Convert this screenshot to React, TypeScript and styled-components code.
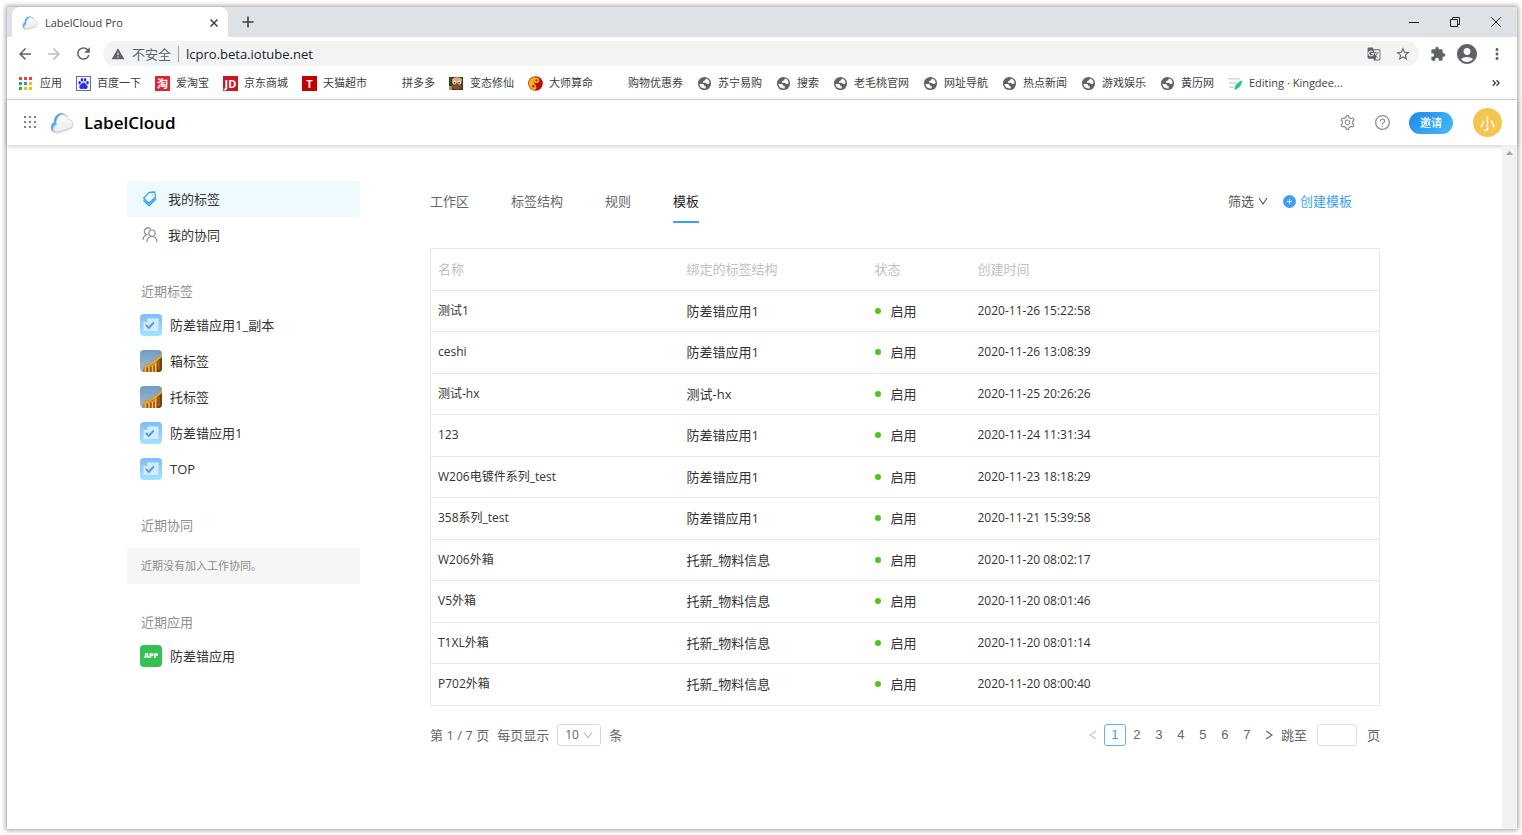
import React from 'react';
import styled, { createGlobalStyle, css } from 'styled-components';
import { MdArrowBack, MdArrowForward, MdRefresh, MdWarning, MdStarBorder, MdExtension, MdAccountCircle, MdMoreVert, MdGTranslate } from 'react-icons/md';
import { AiOutlineQuestionCircle, AiOutlineSetting } from 'react-icons/ai';

const GlobalStyle = createGlobalStyle`
  * { box-sizing: border-box; }
  body {
    margin: 0;
    background: #fff;
    font-family: "Open Sans", "Noto Sans CJK SC", sans-serif;
    font-size: 13px;
    line-height: 18px;
    color: #333;
  }
  a { color: inherit; text-decoration: none; }
  button, input, select { font: inherit; color: inherit; }
  button { border: 0; padding: 0; background: none; display: inline-flex; align-items: center; justify-content: center; }
  ul { list-style: none; margin: 0; padding: 0; }
  svg { display: block; flex: none; }
`;

/* ---------- window frame ---------- */

const Desktop = styled.div`
  min-height: 100vh;
  padding: 7px 5px 6px 7px;
  display: flex;
  flex-direction: column;
`;

const Window = styled.div`
  flex: 1;
  display: flex;
  flex-direction: column;
  background: #fff;
  box-shadow: 0 0 5px 1px rgba(0, 0, 0, 0.4);
`;

const TabStrip = styled.div`
  height: 30px;
  display: flex;
  align-items: center;
  background: #dee1e6;
  color: #3c4043;
`;

const BrowserTab = styled.div`
  align-self: stretch;
  width: 216px;
  margin-left: 5px;
  padding: 2px 10px 0 10px;
  display: flex;
  align-items: center;
  gap: 7px;
  background: #fff;
  border-radius: 8px 8px 0 0;
  font-size: 11px;
  span { flex: 1; }
`;

const NewTab = styled.button`
  width: 40px;
  height: 30px;
`;

const WindowButtons = styled.div`
  margin-left: auto;
  padding-right: 1px;
  display: flex;
  button { width: 41px; height: 26px; }
`;

const Toolbar = styled.div`
  height: 33px;
  padding: 0 11px 0 10px;
  display: flex;
  align-items: center;
  color: #5f6368;
`;

const NavButtons = styled.div`
  display: flex;
  gap: 13px;
  margin-right: 12px;
  button { width: 16px; }
  button:disabled { color: #babcbe; }
`;

const AddressBar = styled.div`
  flex: 1;
  height: 25px;
  padding: 0 8px;
  display: flex;
  align-items: center;
  gap: 7px;
  border-radius: 13px;
  background: #f1f3f4;
  input {
    flex: 1;
    min-width: 0;
    border: 0;
    padding: 0 0 0 7px;
    height: 16px;
    border-left: 1px solid #9aa0a6;
    background: none;
    color: #202124;
    outline: none;
  }
  button + button { margin-left: 7px; }
`;

const ToolbarActions = styled.div`
  display: flex;
  align-items: center;
  gap: 9px;
  margin-left: 11px;
`;

const Bookmarks = styled.nav`
  height: 30px;
  padding: 0 17px 3px 12px;
  display: flex;
  align-items: center;
  justify-content: space-between;
  border-bottom: 1px solid #dadce0;
  font-size: 11px;
  color: #3c4043;
  ul { display: flex; gap: 14px; }
  a { display: flex; align-items: center; gap: 6px; white-space: nowrap; }
`;

const IconSlot = styled.span`
  width: 15px;
  height: 15px;
  flex: none;
`;

/* ---------- application header ---------- */

const AppHeader = styled.header`
  height: 45px;
  padding: 0 15px 0 16px;
  display: flex;
  align-items: center;
  background: #fff;
  box-shadow: 0 1px 5px rgba(0, 0, 0, 0.22);
  color: #8c8c8c;
`;

const Brand = styled.a`
  display: flex;
  align-items: center;
  gap: 10px;
  margin-left: 13px;
  font-size: 17px;
  font-weight: 600;
  line-height: 24px;
  && { color: #000; }
`;

const HeaderActions = styled.div`
  margin-left: auto;
  display: flex;
  align-items: center;
  gap: 18px;
`;

const InviteButton = styled.button`
  width: 44px;
  height: 22px;
  margin-right: 2px;
  border-radius: 11px;
  background: linear-gradient(135deg, #1f87ea, #45bcff);
  color: #fff;
  font-size: 11px;
  font-weight: 500;
`;

const Avatar = styled.button`
  width: 29px;
  height: 29px;
  border-radius: 50%;
  background: #f3c74f;
  color: #fff;
  font-size: 15px;
`;

const Viewport = styled.div`
  flex: 1;
  display: flex;
`;

const Content = styled.div`
  flex: 1;
  min-width: 0;
  padding: 36px 122px 48px 120px;
  display: flex;
  gap: 70px;
`;

const ScrollTrack = styled.div`
  width: 15px;
  padding-top: 5px;
  background: #f1f1f1;
`;

/* ---------- sidebar ---------- */

const Sidebar = styled.aside`
  width: 233px;
  flex: none;
`;

const SideLink = styled.a<{ $active?: boolean; $recent?: boolean }>`
  height: 36px;
  padding: 0 0 1px ${p => (p.$recent ? 13 : 15)}px;
  display: flex;
  align-items: center;
  gap: ${p => (p.$recent ? 8 : 10)}px;
  border-radius: 2px;
  ${p => p.$active && css`background: #effaff;`}
`;

const SideHeading = styled.h2`
  margin: 29px 0 7px;
  padding-left: 14px;
  font-size: 13px;
  font-weight: 400;
  color: #8f8f8f;
`;

const EmptyNote = styled.p`
  height: 36px;
  margin: 14px 0 0;
  padding: 0 14px;
  display: flex;
  align-items: center;
  border-radius: 2px;
  background: #f6f6f6;
  font-size: 11px;
  color: #8c8c8c;
`;

/* ---------- main panel ---------- */

const Main = styled.main`
  flex: 1;
  min-width: 0;
`;

const TabBar = styled.div`
  height: 42px;
  margin-bottom: 25px;
  padding-right: 28px;
  display: flex;
  align-items: stretch;
  justify-content: space-between;
`;

const Tabs = styled.nav`
  display: flex;
  gap: 42px;
`;

const TabLink = styled.a<{ $active?: boolean }>`
  display: flex;
  align-items: center;
  border-bottom: 2px solid ${p => (p.$active ? '#3a9ff5' : 'transparent')};
  color: ${p => (p.$active ? '#222' : '#666')};
`;

const TabActions = styled.div`
  display: flex;
  align-items: center;
  gap: 15px;
  padding-bottom: 2px;
  button { gap: 4px; color: #555; }
  button:last-child { color: #3a9ff5; }
`;

const Table = styled.table`
  width: 100%;
  table-layout: fixed;
  border-collapse: collapse;
  border: 1px solid #e8e8e8;
  tr { height: 41px; border-bottom: 1px solid #e8e8e8; }
  thead tr, tbody tr:nth-child(even) { height: 42px; }
  th, td { padding: 0 7px 1px; text-align: left; }
  th { font-weight: 400; color: #bfbfbf; }
`;

const Col = styled.col<{ $w?: number }>`
  width: ${p => (p.$w ? `${p.$w}px` : 'auto')};
`;

const CompactCell = styled.td`
  font-size: 12px;
`;

const Status = styled.span`
  display: flex;
  align-items: center;
  gap: 10px;
  &::before {
    content: '';
    width: 6px;
    height: 6px;
    border-radius: 50%;
    background: #52c41a;
  }
`;

const PagerBar = styled.div`
  margin-top: 18px;
  display: flex;
  justify-content: space-between;
  color: #666;
`;

const PageSize = styled.label`
  display: flex;
  align-items: center;
  gap: 8px;
`;

const SelectBox = styled.span`
  width: 44px;
  height: 22px;
  display: grid;
  align-items: center;
  border: 1px solid #d9d9d9;
  border-radius: 3px;
  color: #bfbfbf;
  > * { grid-area: 1 / 1; }
  svg { justify-self: end; margin-right: 7px; }
  select {
    appearance: none;
    width: 100%;
    height: 20px;
    padding: 0 0 0 7px;
    border: 0;
    background: none;
    color: #666;
    font-size: 12px;
  }
`;

const Pager = styled.nav`
  display: flex;
  align-items: center;
  height: 22px;
`;

const PageButton = styled.button<{ $current?: boolean }>`
  width: 22px;
  height: 22px;
  font-family: "Liberation Sans", sans-serif;
  ${p => p.$current && css`
    border: 1px solid #5cb3fa;
    border-radius: 3px;
    color: #3a9ff5;
  `}
  &:disabled { color: #c4c4c4; }
`;

const JumpTo = styled.label`
  display: flex;
  align-items: center;
  gap: 10px;
  margin-left: 1px;
  input {
    width: 40px;
    height: 22px;
    border: 1px solid #dcdfe6;
    border-radius: 3px;
    background: #fff;
  }
`;

/* ---------- drawings ---------- */

const Cloud = ({ size }: { size: number }) => (
  <svg width={size} height={size} viewBox="0 0 24 24" aria-hidden="true">
    <defs>
      <linearGradient id={`body${size}`} x1="0" y1="0" x2=".3" y2="1">
        <stop offset="0" stopColor="#ffffff" />
        <stop offset="1" stopColor="#ececee" />
      </linearGradient>
      <linearGradient id={`rim${size}`} x1="0" y1="0" x2="0" y2="1">
        <stop offset="0" stopColor="#3d9bea" />
        <stop offset="1" stopColor="#5bb4f7" />
      </linearGradient>
    </defs>
    <path d="M1.200 18.500C.2 15.500 1.200 12.400 4 11.100 3.800 6.500 6.900 2.400 11.200 2.200c2.900-.1 5.300 1.100 6.300 3.600L8 20.500l-4 .9C2.600 20.900 1.600 19.800 1.200 18.500z" fill={`url(#rim${size})`} />
    <path d="M4 21.500c-2-2.500-1.600-6.200 1.800-7.900C5.400 8.400 7.900 3.700 12 3.200c3.300-.3 5.600 1.700 6.200 4.800 3.400.4 5.400 2.800 5.200 5.900-.3 2.900-2.500 4.600-5.300 5.300L8.200 22.300c-1.600.4-3.100.2-4.200-.8z" fill="#d3d4d7" />
    <path d="M5 19.800c-1-2.300-.1-4.600 2.400-5.700C6.300 9.200 8.600 4.600 12.300 4c2.900-.3 4.900 1.500 5.300 4.700 3 .3 4.900 2.100 4.900 4.600 0 2.300-1.700 3.700-4.500 4.400L8.500 20.200c-1.300.4-2.500.3-3.500-.4z" fill={`url(#body${size})`} />
  </svg>
);

const AppsGrid = () => {
  const colors = ['#ea4335', '#ea4335', '#ea4335', '#34a853', '#4285f4', '#fbbc04', '#34a853', '#fbbc04', '#fbbc04'];
  return (
    <svg width="15" height="15" viewBox="0 0 15 15" aria-hidden="true">
      {colors.map((c, i) => <rect key={i} x={(i % 3) * 5} y={1 + Math.floor(i / 3) * 5} width="3" height="3" fill={c} />)}
    </svg>
  );
};

const Baidu = () => (
  <svg width="15" height="15" viewBox="0 0 15 15" aria-hidden="true">
    <rect x=".5" y=".5" width="14" height="14" fill="#fff" stroke="#5a62e0" />
    <g fill="#2932e1">
      <ellipse cx="3.600" cy="6.800" rx="1.300" ry="1.800" />
      <ellipse cx="5.900" cy="3.900" rx="1.300" ry="1.800" />
      <ellipse cx="9.100" cy="3.900" rx="1.300" ry="1.800" />
      <ellipse cx="11.500" cy="6.800" rx="1.300" ry="1.800" />
      <path d="M7.500 6.600c1.600 0 2.200 1.500 3.300 2.500 1.600 1.500.9 4-1.200 4-1 0-1.300-.3-2.100-.3s-1.100.3-2.100.3c-2.100 0-2.800-2.500-1.200-4 1.100-1 1.700-2.500 3.300-2.500z" />
    </g>
  </svg>
);

const LetterTile = styled.span<{ $bg: string }>`
  width: 15px;
  height: 15px;
  flex: none;
  display: flex;
  align-items: center;
  justify-content: center;
  background: ${p => p.$bg};
  color: #fff;
  font-size: 11px;
  font-weight: 700;
  line-height: 15px;
`;

const Owl = () => (
  <svg width="15" height="15" viewBox="0 0 15 15" aria-hidden="true">
    <rect y="1" width="14" height="13" fill="#4a3218" />
    <rect y="1" width="3" height="7" fill="#2f4420" />
    <rect y="10" width="3" height="4" fill="#7fae4a" />
    <ellipse cx="8" cy="4" rx="5.200" ry="2.800" fill="#d9ad78" />
    <ellipse cx="8" cy="10.500" rx="5" ry="3" fill="#8a4a2c" />
    <circle cx="5.400" cy="6.600" r="2" fill="#f1dfc4" />
    <circle cx="10.400" cy="6.600" r="2" fill="#f1dfc4" />
    <circle cx="5.600" cy="6.700" r=".8" fill="#20150c" />
    <circle cx="10.200" cy="6.700" r=".8" fill="#20150c" />
  </svg>
);

const YinYang = () => (
  <svg width="15" height="15" viewBox="0 0 16 16" aria-hidden="true">
    <circle cx="8" cy="8" r="7.800" fill="#b80f0a" />
    <path d="M8 .7a7.300 7.300 0 0 0-1.500 14.400C8.800 14.500 9.500 12.500 8.500 10.500 7.500 8.500 5.800 7.500 6 4.800 6.100 2.500 7.500 1 9.500.7z" fill="#fcb413" />
    <circle cx="9" cy="4.500" r="3" fill="#fcb413" />
    <circle cx="9" cy="4.600" r="1.200" fill="#b80f0a" />
    <circle cx="5.600" cy="11" r="1.300" fill="#b80f0a" />
  </svg>
);

const Globe = () => (
  <svg width="15" height="15" viewBox="0 0 16 16" aria-hidden="true">
    <circle cx="8" cy="8" r="7" fill="#5f6368" />
    <path d="M2.600 8.400h3c1.200 0 2.200.8 2.200 1.700v.9h1.500v2.100c-1 .4-2.600.2-3.600-.3-1.800-.9-3-2.500-3.100-4.400z" fill="#fff" />
    <path d="M9.600 2.700c2.100.6 3.700 2.400 3.900 4.700-.7.900-1.700 1.400-2.600 1.200-.9-.2-1-1.200-1.700-1.300H7.200c-.9-.1-1.200-1.200-.5-1.800.4-.4 1.400-.2 1.900-.7.600-.6.200-1.600 1-2.100z" fill="#fff" />
  </svg>
);

const EditingIcon = () => (
  <svg width="15" height="15" viewBox="0 0 15 15" aria-hidden="true">
    <path d="M0 2.800h12M1 7h7M1 11.200h5" stroke="#c5dcf0" strokeWidth="1.500" />
    <path d="M14 4.500c.3 4.300-3 8.300-7.700 9.300.3-4.200 3-8 7.700-9.300z" fill="#2fc878" />
  </svg>
);

const DotGrid = () => (
  <svg width="14" height="14" viewBox="0 0 14 14" aria-hidden="true">
    {Array.from({ length: 9 }, (_, i) => <rect key={i} x={1 + (i % 3) * 5} y={Math.floor(i / 3) * 5} width="2" height="2" fill="#808080" />)}
  </svg>
);

const TagIcon = () => (
  <svg width="16" height="16" viewBox="0 0 16 16" fill="none" stroke="#3a9ff5" strokeWidth="1.300" strokeLinejoin="round" aria-hidden="true">
    <path d="M1.600 7.200L7.200 1.400l5.600-.4.600 5-6.300 6.200z" />
    <path d="M1.500 9.600l5.600 5.200 7-7" />
    <path d="M2 8.500l5.100 5 6.600-6.500" strokeWidth=".8" />
    <circle cx="10.300" cy="3.900" r=".6" fill="#3a9ff5" stroke="none" />
  </svg>
);

const PeopleIcon = () => (
  <svg width="16" height="16" viewBox="0 0 16 16" fill="none" stroke="#8c8c8c" strokeWidth="1.200" strokeLinecap="round" aria-hidden="true">
    <circle cx="10" cy="6.200" r="3.200" />
    <path d="M4.800 14.600c.2-2.900 2.300-5.100 5.100-5.100s4.900 2.200 5.100 5.100" />
    <path d="M8.300 2A3.200 3.200 0 0 0 3.200 6.500c.4.700 1 1.100 1.500 1.300C2.500 8.600 1.200 10.200 1 12.300" />
  </svg>
);

const CheckTile = () => (
  <svg width="22" height="22" viewBox="0 0 22 22" aria-hidden="true">
    <defs>
      <linearGradient id="tile" x1="0" y1="0" x2="0" y2="1">
        <stop offset="0" stopColor="#7dbcfb" />
        <stop offset="1" stopColor="#a5e4ff" />
      </linearGradient>
    </defs>
    <rect width="22" height="22" rx="4" fill="url(#tile)" />
    <path d="M7.500 4.500h11v12.500H3.500V8h4z" fill="#d3ecff" />
    <path d="M5.800 10.800l3 3 5-5.300" fill="none" stroke="#4a97f2" strokeWidth="1.900" />
  </svg>
);

const PhotoTile = () => (
  <svg width="22" height="22" viewBox="0 0 22 22" aria-hidden="true">
    <defs>
      <clipPath id="round"><rect width="22" height="22" rx="4" /></clipPath>
      <linearGradient id="sky" x1="0" y1="0" x2="0" y2="1">
        <stop offset="0" stopColor="#6c9cc8" />
        <stop offset="1" stopColor="#a9bccb" />
      </linearGradient>
    </defs>
    <g clipPath="url(#round)">
      <rect width="22" height="22" fill="url(#sky)" />
      <path d="M22 4v18H2l2-6.500 4-1.500L14 10z" fill="#c9822a" />
      <path d="M22 4l-8 6.500L8 14.500 4 16v1.500l5-1.500 6-3.500 7-5z" fill="#e0a63e" />
      <path d="M5.500 17.500V22M9 16.500V22M12.500 15.500V22M15.500 13V22" stroke="#f2c25c" strokeWidth="1.200" />
      <path d="M7.300 18v4M10.800 17v5M14 16v6" stroke="#8a4a14" strokeWidth="1.200" />
      <path d="M17.500 11l4.500-4v15h-5z" fill="#6a4316" />
      <path d="M19 10.500V20" stroke="#b98026" strokeWidth="1" />
    </g>
  </svg>
);

const AppTile = styled.span`
  width: 22px;
  height: 22px;
  display: flex;
  align-items: center;
  justify-content: center;
  border-radius: 4px;
  background: #35c052;
  color: #fff;
  font-size: 7px;
  font-weight: 800;
`;

const Chevron = ({ dir = 'down' }: { dir?: 'down' | 'left' | 'right' }) => {
  const d = { down: 'M1 2l4 6 4-6', left: 'M8 1L2 5l6 4', right: 'M2 1l6 4-6 4' }[dir];
  return (
    <svg width="10" height="10" viewBox="0 0 10 10" fill="none" stroke="currentColor" strokeWidth="1.100" aria-hidden="true">
      <path d={d} />
    </svg>
  );
};

/* ---------- data ---------- */

const bookmarks: { label: string; icon: React.ReactNode }[] = [
  { label: '应用', icon: <AppsGrid /> },
  { label: '百度一下', icon: <Baidu /> },
  { label: '爱淘宝', icon: <LetterTile $bg="#e02433">淘</LetterTile> },
  { label: '京东商城', icon: <LetterTile $bg="#c81623">JD</LetterTile> },
  { label: '天猫超市', icon: <LetterTile $bg="#c40000">T</LetterTile> },
  { label: '拼多多', icon: <IconSlot /> },
  { label: '变态修仙', icon: <Owl /> },
  { label: '大师算命', icon: <YinYang /> },
  { label: '购物优惠券', icon: <IconSlot /> },
  ...['苏宁易购', '搜索', '老毛桃官网', '网址导航', '热点新闻', '游戏娱乐', '黄历网'].map(label => ({ label, icon: <Globe /> })),
  { label: 'Editing · Kingdee...', icon: <EditingIcon /> },
];

const recentTags = [
  { label: '防差错应用1_副本', photo: false },
  { label: '箱标签', photo: true },
  { label: '托标签', photo: true },
  { label: '防差错应用1', photo: false },
  { label: 'TOP', photo: false },
];

const rows = [
  ['测试1', '防差错应用1', '2020-11-26 15:22:58'],
  ['ceshi', '防差错应用1', '2020-11-26 13:08:39'],
  ['测试-hx', '测试-hx', '2020-11-25 20:26:26'],
  ['123', '防差错应用1', '2020-11-24 11:31:34'],
  ['W206电镀件系列_test', '防差错应用1', '2020-11-23 18:18:29'],
  ['358系列_test', '防差错应用1', '2020-11-21 15:39:58'],
  ['W206外箱', '托新_物料信息', '2020-11-20 08:02:17'],
  ['V5外箱', '托新_物料信息', '2020-11-20 08:01:46'],
  ['T1XL外箱', '托新_物料信息', '2020-11-20 08:01:14'],
  ['P702外箱', '托新_物料信息', '2020-11-20 08:00:40'],
];

/* ---------- page ---------- */

const BrowserChrome = () => (
  <>
    <TabStrip>
      <BrowserTab>
        <Cloud size={16} />
        <span>LabelCloud Pro</span>
        <button aria-label="关闭标签页">
          <svg width="8" height="8" viewBox="0 0 8 8" stroke="#3c4043" strokeWidth="1.500"><path d="M.5.5l7 7M7.500.5l-7 7" /></svg>
        </button>
      </BrowserTab>
      <NewTab aria-label="新标签页">
        <svg width="12" height="12" viewBox="0 0 12 12" stroke="#3c4043" strokeWidth="1.600"><path d="M6 .5v11M.5 6h11" /></svg>
      </NewTab>
      <WindowButtons>
        <button aria-label="最小化"><svg width="10" height="10" viewBox="0 0 10 10" stroke="#222"><path d="M0 5.500h10" /></svg></button>
        <button aria-label="还原"><svg width="10" height="10" viewBox="0 0 10 10" stroke="#222" fill="none"><path d="M.5 2.500h7v7h-7zM2.500 2.500v-2h7v7h-2" /></svg></button>
        <button aria-label="关闭"><svg width="10" height="10" viewBox="0 0 10 10" stroke="#222"><path d="M.3.3l9.400 9.400M9.700.3L.3 9.700" /></svg></button>
      </WindowButtons>
    </TabStrip>
    <Toolbar>
      <NavButtons>
        <button aria-label="后退"><MdArrowBack size={18} /></button>
        <button aria-label="前进" disabled><MdArrowForward size={18} /></button>
        <button aria-label="刷新"><MdRefresh size={19} /></button>
      </NavButtons>
      <AddressBar>
        <MdWarning size={14} />
        <span>不安全</span>
        <input aria-label="地址" defaultValue="lcpro.beta.iotube.net" />
        <button aria-label="翻译"><MdGTranslate size={14} /></button>
        <button aria-label="收藏"><MdStarBorder size={16} /></button>
      </AddressBar>
      <ToolbarActions>
        <button aria-label="扩展程序"><MdExtension size={16} /></button>
        <button aria-label="用户"><MdAccountCircle size={24} /></button>
        <button aria-label="菜单"><MdMoreVert size={18} /></button>
      </ToolbarActions>
    </Toolbar>
    <Bookmarks aria-label="书签">
      <ul>
        {bookmarks.map(b => <li key={b.label}><a href="#">{b.icon}{b.label}</a></li>)}
      </ul>
      <button aria-label="更多书签">
        <svg width="8" height="8" viewBox="0 0 8 8" fill="none" stroke="#3c4043" strokeWidth="1.300"><path d="M.8 1.200L3.400 4 .8 6.800M4.500 1.200L7.100 4 4.500 6.800" /></svg>
      </button>
    </Bookmarks>
  </>
);

export default function App() {
  return (
    <Desktop>
      <GlobalStyle />
      <Window>
        <BrowserChrome />
        <AppHeader>
          <button aria-label="应用菜单"><DotGrid /></button>
          <Brand href="#"><Cloud size={24} />LabelCloud</Brand>
          <HeaderActions>
            <button aria-label="设置"><AiOutlineSetting size={17} /></button>
            <button aria-label="帮助"><AiOutlineQuestionCircle size={17} /></button>
            <InviteButton>邀请</InviteButton>
            <Avatar>小</Avatar>
          </HeaderActions>
        </AppHeader>
        <Viewport>
          <Content>
            <Sidebar>
              <SideLink href="#" $active><TagIcon />我的标签</SideLink>
              <SideLink href="#"><PeopleIcon />我的协同</SideLink>
              <SideHeading>近期标签</SideHeading>
              {recentTags.map(t => (
                <SideLink key={t.label} href="#" $recent>{t.photo ? <PhotoTile /> : <CheckTile />}{t.label}</SideLink>
              ))}
              <SideHeading>近期协同</SideHeading>
              <EmptyNote>近期没有加入工作协同。</EmptyNote>
              <SideHeading>近期应用</SideHeading>
              <SideLink href="#" $recent><AppTile>APP</AppTile>防差错应用</SideLink>
            </Sidebar>
            <Main>
              <TabBar>
                <Tabs>
                  {['工作区', '标签结构', '规则', '模板'].map(t => <TabLink key={t} href="#" $active={t === '模板'}>{t}</TabLink>)}
                </Tabs>
                <TabActions>
                  <button>筛选 <Chevron /></button>
                  <button>
                    <svg width="13" height="13" viewBox="0 0 13 13" aria-hidden="true"><circle cx="6.500" cy="6.500" r="6.500" fill="#3a9ff5" /><path d="M6.500 4v5M4 6.500h5" stroke="#fff" /></svg>
                    创建模板
                  </button>
                </TabActions>
              </TabBar>
              <Table>
                <colgroup><Col $w={249} /><Col $w={188} /><Col $w={103} /><Col /></colgroup>
                <thead>
                  <tr><th>名称</th><th>绑定的标签结构</th><th>状态</th><th>创建时间</th></tr>
                </thead>
                <tbody>
                  {rows.map(([name, bound, date]) => (
                    <tr key={name}><CompactCell>{name}</CompactCell><td>{bound}</td><td><Status>启用</Status></td><CompactCell>{date}</CompactCell></tr>
                  ))}
                </tbody>
              </Table>
              <PagerBar>
                <PageSize>
                  <span>第 1 / 7 页</span>
                  <span>每页显示</span>
                  <SelectBox><Chevron /><select defaultValue="10"><option>10</option><option>20</option><option>50</option></select></SelectBox>
                  <span>条</span>
                </PageSize>
                <Pager aria-label="分页">
                  <PageButton aria-label="上一页" disabled><Chevron dir="left" /></PageButton>
                  {[1, 2, 3, 4, 5, 6, 7].map(n => <PageButton key={n} $current={n === 1}>{n}</PageButton>)}
                  <PageButton aria-label="下一页"><Chevron dir="right" /></PageButton>
                  <JumpTo>跳至 <input type="text" aria-label="页码" /> 页</JumpTo>
                </Pager>
              </PagerBar>
            </Main>
          </Content>
          <ScrollTrack>
            <svg width="15" height="6" viewBox="0 0 15 6" aria-hidden="true"><path d="M4 5l3.500-4L11 5z" fill="#a3a3a3" /></svg>
          </ScrollTrack>
        </Viewport>
      </Window>
    </Desktop>
  );
}
